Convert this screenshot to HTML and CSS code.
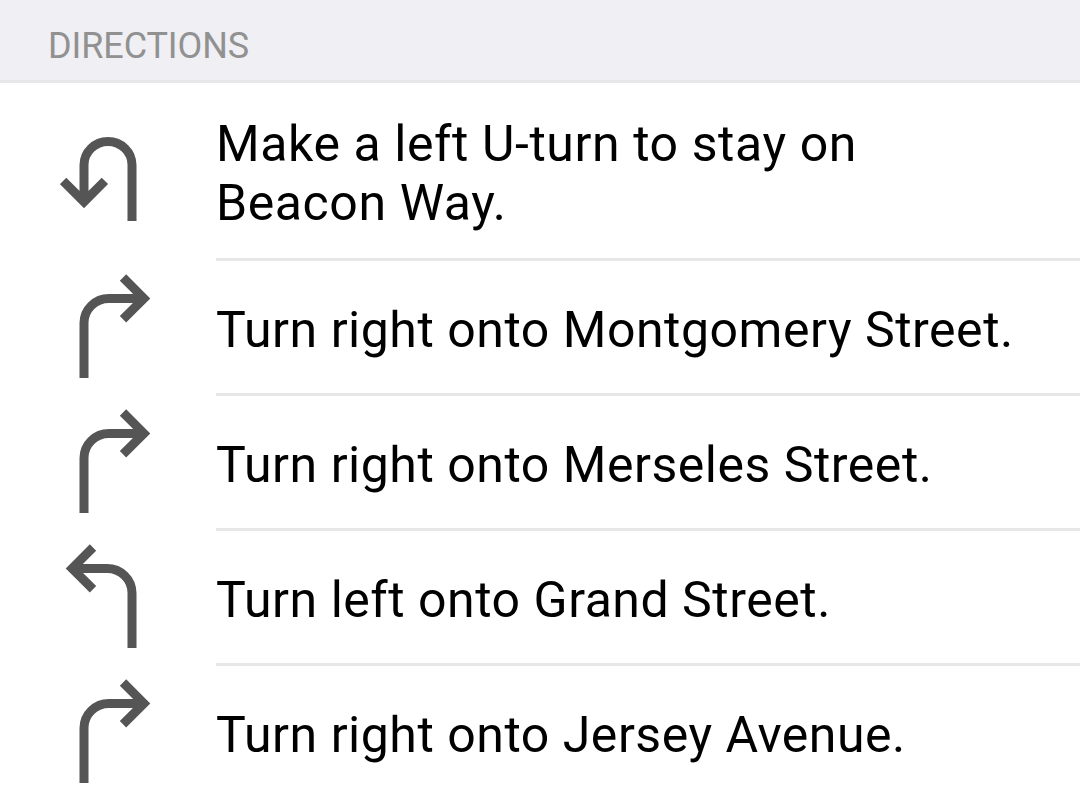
FILE: index.html
```
<!DOCTYPE html>
<html lang="en">
<head>
<meta charset="utf-8">
<title>Directions</title>
<link rel="stylesheet" href="styles.css">
</head>
<body>
<h1 class="header">DIRECTIONS</h1>
<ul class="steps">
<li class="step step-tall"><svg class="icon uturn" viewBox="0 0 80 86"><path d="M72 85V29a24 23.500 0 0 0-48 0V67M3.100 44.900L24 65.800L44.900 44.900"/></svg><p class="text">Make a left U-turn to stay on<br>Beacon Way.</p></li>
<li class="step"><svg class="icon right" viewBox="0 0 74 106"><path d="M6 105V50A25 24.600 0 0 1 31 25.400H65M45 4.500L65.900 25.400L45 46.300"/></svg><p class="text">Turn right onto Montgomery Street.</p></li>
<li class="step"><svg class="icon right" viewBox="0 0 74 106"><path d="M6 105V50A25 24.600 0 0 1 31 25.400H65M45 4.500L65.900 25.400L45 46.300"/></svg><p class="text">Turn right onto Merseles Street.</p></li>
<li class="step"><svg class="icon left" viewBox="0 0 74 106"><path d="M68 105V50A25 24.600 0 0 0 43 25.400H9M29 4.500L8.100 25.400L29 46.300"/></svg><p class="text">Turn left onto Grand Street.</p></li>
<li class="step"><svg class="icon right" viewBox="0 0 74 106"><path d="M6 105V50A25 24.600 0 0 1 31 25.400H65M45 4.500L65.900 25.400L45 46.300"/></svg><p class="text">Turn right onto Jersey Avenue.</p></li>
</ul>
</body>
</html>
```
FILE: styles.css
```
* { box-sizing: border-box; }
body { margin: 0; height: 793px; overflow: hidden; background: #fff; color: #000; font-family: Roboto, "Liberation Sans", sans-serif; }
.header { margin: 0; height: 83px; padding: 25px 48px 0; background: #efeff4; border-bottom: 3px solid #e7e7e9; color: #919191; font-size: 36px; line-height: 42px; font-weight: 400; letter-spacing: -0.1px; }
.steps { margin: 0; padding: 0; list-style: none; }
.step { display: grid; grid-template-columns: 216px 1fr; height: 135px; }
.step-tall { height: 178px; }
.icon { fill: none; stroke: #555; stroke-width: 9; }
.uturn { width: 80px; height: 86px; margin: 53px 0 0 60px; }
.right { width: 74px; height: 106px; margin: 12px 0 0 78px; }
.left { width: 74px; height: 106px; margin: 12px 0 0 64px; }
.text { margin: 0; padding: 40px 0 0; border-bottom: 3px solid #e7e7e7; font-size: 50px; line-height: 59px; letter-spacing: 0.52px; white-space: nowrap; }
.step-tall .text { padding-top: 32px; letter-spacing: 0.58px; }
```
